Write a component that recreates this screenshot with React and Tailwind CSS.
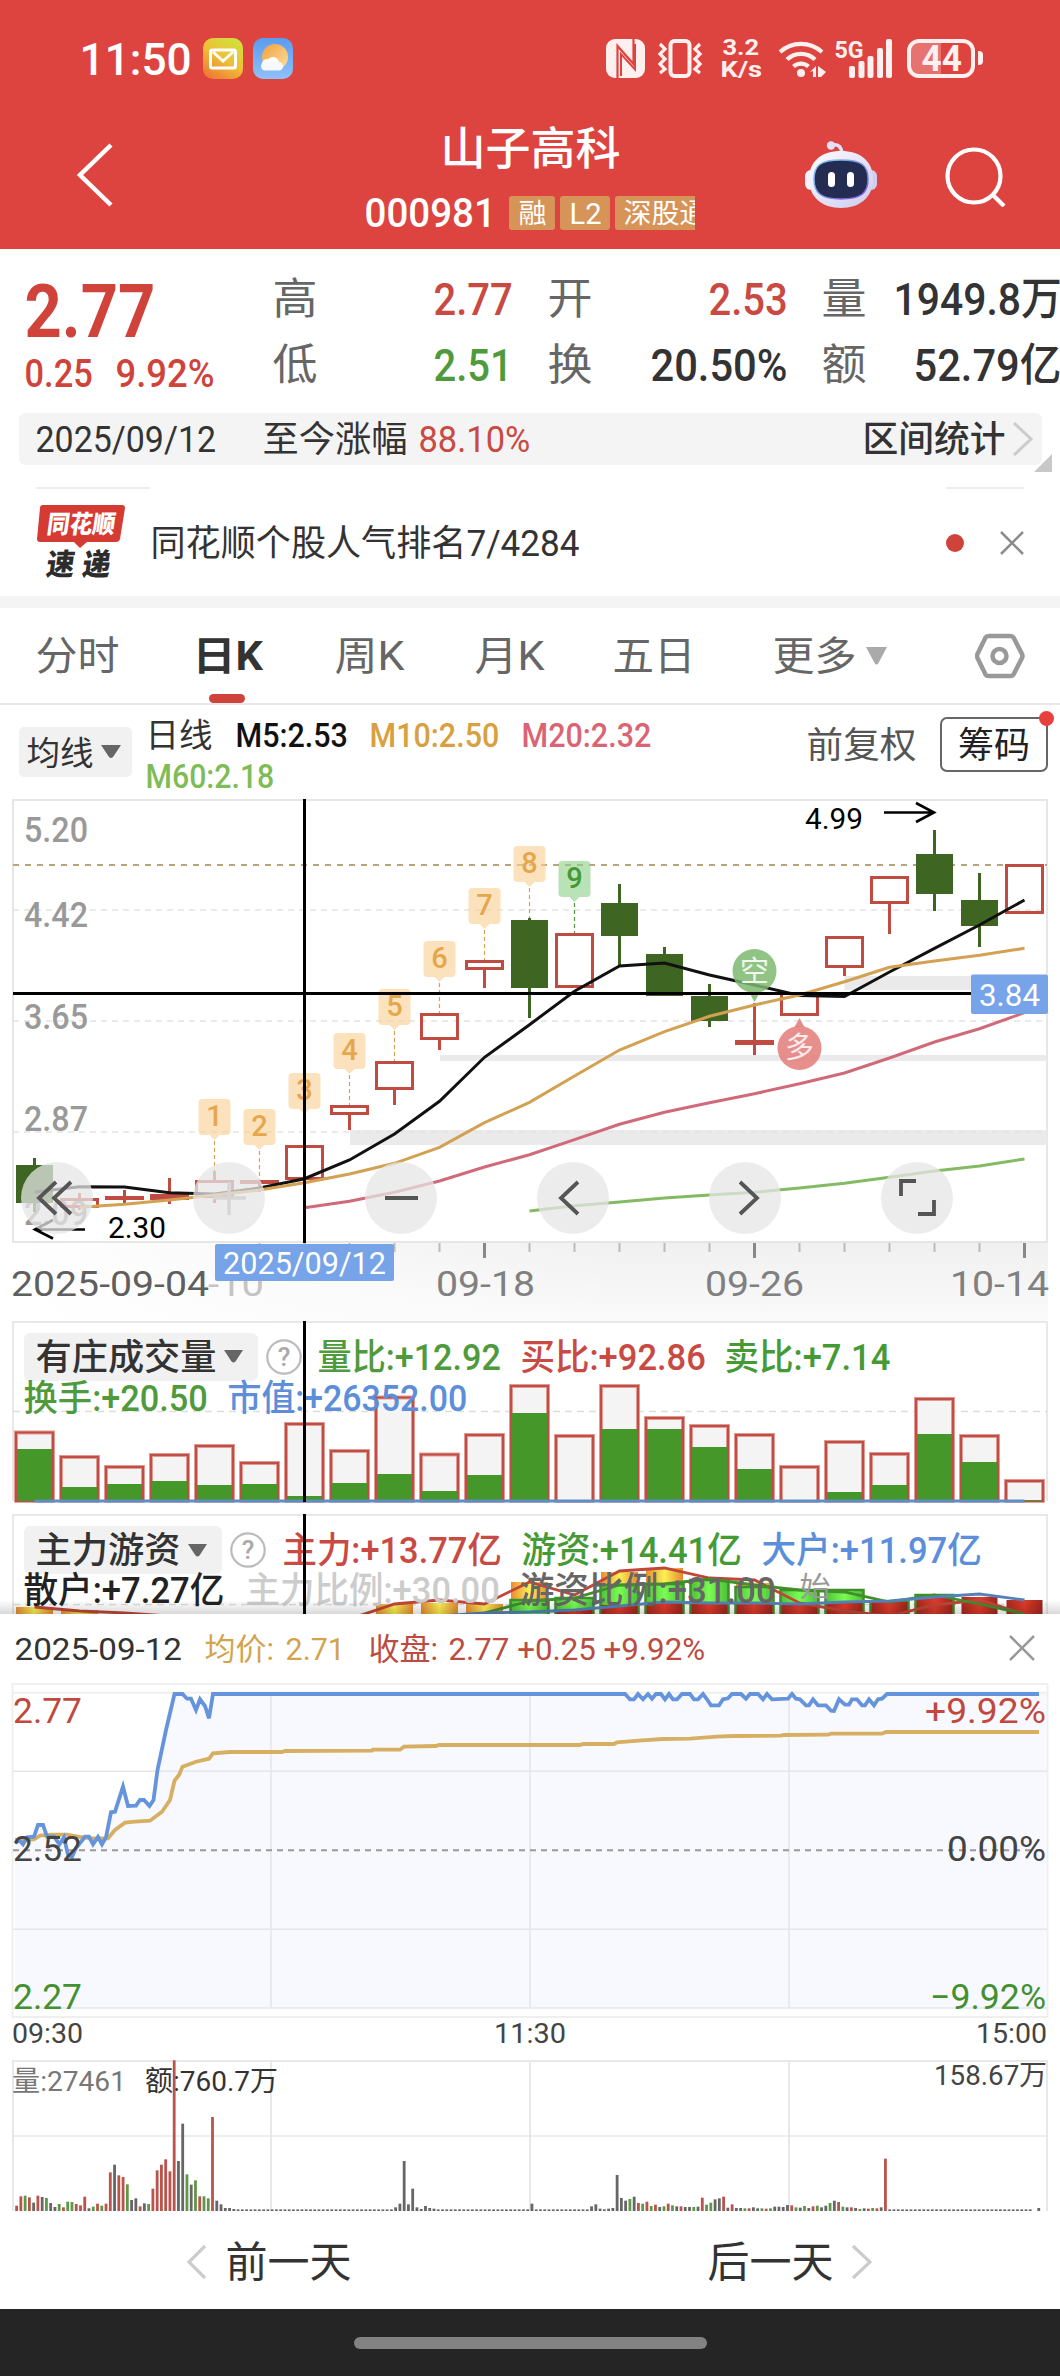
import { useLayoutEffect, useRef, useState } from 'react';
import { clsx } from 'clsx';

/**
 * Text squeezed or stretched horizontally to a fixed width.
 * The glyphs' side bearings may stick out by a pixel on each side.
 * @param {{ w: number, className?: string, children: any }} props
 * @returns {JSX.Element}
 */
function Fit({ w, className, children }) {
  const ref = useRef(null);
  const [scale, setScale] = useState(1);

  useLayoutEffect(() => {
    setScale((w + 3) / ref.current.offsetWidth);
  }, [w, children]);

  return (
    <span className={clsx('block shrink-0 leading-none', className)} style={{ width: w }}>
      <span
        ref={ref}
        className="inline-block origin-left whitespace-pre align-top"
        style={{ transform: `translate(-1.5px, 1px) scaleX(${scale})` }}
      >
        {children}
      </span>
    </span>
  );
}

/** Text inside a chart. */
function Label({ x, y, w, size = 35, fill = '#999', weight = 400, children }) {
  return (
    <text
      x={x}
      y={y}
      textLength={w}
      lengthAdjust="spacingAndGlyphs"
      fontSize={size}
      fontWeight={weight}
      fill={fill}
    >
      {children}
    </text>
  );
}

function StatusBar() {
  return (
    <div className="flex h-[116px] items-center pl-[81px] text-white">
      <Fit w={109} className="text-[45px] font-medium">11:50</Fit>
      <svg className="ml-[13px]" width="40" height="41" viewBox="0 0 40 41">
        <defs>
          <linearGradient id="mail" x1="0.8" y1="0" x2="0.2" y2="1">
            <stop offset="0" stopColor="#cfe23c" />
            <stop offset="0.5" stopColor="#efbf35" />
            <stop offset="1" stopColor="#ee7836" />
          </linearGradient>
        </defs>
        <rect width="40" height="41" rx="10" fill="url(#mail)" />
        <rect x="7.500" y="12" width="25" height="18" rx="2" fill="none" stroke="#fff" strokeWidth="3" />
        <path d="M10 14l10 9 10-9" fill="none" stroke="#fff" strokeWidth="3" />
      </svg>
      <svg className="ml-[10px]" width="40" height="41" viewBox="0 0 40 41">
        <defs>
          <linearGradient id="sky" x1="0" y1="0" x2="0" y2="1">
            <stop offset="0" stopColor="#5a9cf0" />
            <stop offset="1" stopColor="#8fc1f8" />
          </linearGradient>
          <linearGradient id="sun" x1="0" y1="0" x2="1" y2="1">
            <stop offset="0" stopColor="#f3a03c" />
            <stop offset="1" stopColor="#fbe0a0" />
          </linearGradient>
        </defs>
        <rect width="40" height="41" rx="10" fill="url(#sky)" />
        <circle cx="22" cy="19" r="13" fill="url(#sun)" />
        <circle cx="14" cy="26" r="5" fill="#fff" />
        <circle cx="20" cy="25" r="6" fill="#fff" />
        <rect x="8" y="24" width="22" height="8.500" rx="4.200" fill="#f6f8fc" />
      </svg>

      <svg className="ml-[313px]" width="39" height="39" viewBox="0 0 39 39">
        <rect width="39" height="39" rx="9" fill="#fff0f0" />
        <path d="M11.500 39V7l16 18V0" fill="none" stroke="#DE443F" strokeWidth="2.200" />
        <path d="M15 37V15l14 15.500V5" fill="none" stroke="#DE443F" strokeWidth="2" />
      </svg>
      <svg className="ml-[12px]" width="46" height="39" viewBox="0 0 46 39" fill="none" stroke="#fff0f0">
        <rect x="13.500" y="2" width="19" height="35" rx="4" strokeWidth="4" />
        <path d="M3 5l5 5-5 5 5 5-5 5 5 5-5 4M43 5l-5 5 5 5-5 5 5 5-5 5 5 4" strokeWidth="3.200" />
      </svg>
      <div className="ml-[18px] flex w-[39px] flex-col items-center text-[22px] font-bold text-[#fff0f0]">
        <Fit w={34}>3.2</Fit>
        <Fit w={38}>K/s</Fit>
      </div>
      <svg className="ml-[18px]" width="48" height="39" viewBox="0 0 48 39" fill="none" stroke="#fff0f0" strokeWidth="4.200">
        <path d="M2 13a31 31 0 0 1 42 0" />
        <path d="M9 20.500a20 20 0 0 1 28 0" />
        <path d="M15.500 27.500a11 11 0 0 1 15 0" />
        <circle cx="23" cy="34" r="4" fill="#fff0f0" stroke="none" />
        <path d="M32 33l6-6v11h-3v-6zM40 27l8 6-5 5h-3z" fill="#fff0f0" stroke="none" />
      </svg>
      <div className="relative ml-[10px] h-[39px] w-[57px]">
        <Fit w={26} className="absolute top-[-2px] left-0 text-[24px] font-bold text-[#fff0f0]">5G</Fit>
        <svg width="57" height="39" viewBox="0 0 57 39" fill="#fff0f0">
          <rect x="13" y="27" width="6" height="12" rx="2" />
          <rect x="22.500" y="22" width="6" height="17" rx="2" />
          <rect x="31.500" y="17" width="6" height="22" rx="2" />
          <rect x="41" y="9" width="6" height="30" rx="2" />
          <rect x="50" y="0" width="6" height="39" rx="2" />
        </svg>
      </div>
      <div className="ml-[14px] flex items-center">
        <div className="flex h-[39px] w-[68px] items-center justify-center rounded-[12px] border-[4px] border-[#fff0f0] bg-linear-to-r from-[#e77370] from-50% to-[#DE443F] to-50%">
          <Fit w={37} className="text-[36px] font-bold text-[#fff0f0]">44</Fit>
        </div>
        <div className="ml-[3px] h-[14px] w-[5px] rounded-r-[4px] bg-[#fff0f0]" />
      </div>
    </div>
  );
}

function Robot() {
  return (
    <svg className="mt-[25px] shrink-0" width="72" height="67" viewBox="0 0 72 67">
      <defs>
        <linearGradient id="shell" x1="0" y1="0" x2="1" y2="1">
          <stop offset="0" stopColor="#fff" />
          <stop offset="1" stopColor="#cdc9ee" />
        </linearGradient>
        <linearGradient id="rim" x1="0" y1="0" x2="1" y2="1">
          <stop offset="0" stopColor="#7fd0f0" />
          <stop offset="1" stopColor="#7a4fe0" />
        </linearGradient>
      </defs>
      <path d="M27 4c7-1 9 2 10 8" fill="none" stroke="#e6e0f4" strokeWidth="3.500" />
      <circle cx="26" cy="4.500" r="4.200" fill="#e6e0f4" />
      <rect x="0" y="29" width="12" height="20" rx="6" fill="#f3f1fb" />
      <rect x="60" y="29" width="12" height="20" rx="6" fill="#d2cdf0" />
      <path d="M36 10c19 0 32 10 32 28S55 67 36 67 4 56 4 38s13-28 32-28z" fill="url(#shell)" />
      <path d="M36 19c20 0 27 5 27 19s-7 20-27 20S9 52 9 38s7-19 27-19z" fill="#242c52" stroke="url(#rim)" strokeWidth="1.500" />
      <rect x="23" y="31" width="7" height="15" rx="3.500" fill="#fff" />
      <rect x="42" y="31" width="7" height="15" rx="3.500" fill="#fff" />
    </svg>
  );
}

function TitleBar() {
  return (
    <div className="flex h-[133px] items-start pl-[76px] text-white">
      <svg className="mt-[27px]" width="38" height="64" viewBox="0 0 38 64">
        <path d="M35 2L4 32l31 30" fill="none" stroke="#fff" strokeWidth="4.500" />
      </svg>
      <div className="ml-[252px] w-[329px] overflow-hidden">
        <div className="mt-[8px] flex h-[48px] items-center justify-center">
          <Fit w={177} className="text-[45px] font-medium">山子高科</Fit>
        </div>
        <div className="mt-[24px] flex h-[34px] items-center">
          <Fit w={128} className="text-[40px] font-medium">000981</Fit>
          <div className="ml-[15px] flex shrink-0 gap-[5px] text-[27px]">
            <div className="flex h-[34px] w-[46px] items-center justify-center rounded-[3px] bg-[#D69458]"><Fit w={25}>融</Fit></div>
            <div className="flex h-[34px] w-[50px] items-center justify-center rounded-[3px] bg-[#D69458]"><Fit w={29} className="text-[30px]">L2</Fit></div>
            <div className="flex h-[34px] w-[98px] items-center rounded-[3px] bg-[#D69458] pl-[10px]"><Fit w={81}>深股通</Fit></div>
          </div>
        </div>
      </div>
      <div className="ml-[110px]"><Robot /></div>
      <svg className="mt-[31px] ml-[68px]" width="62" height="60" viewBox="0 0 62 60" fill="none" stroke="#fff" strokeWidth="4.200">
        <circle cx="29" cy="29" r="26.500" />
        <path d="M47 47l12 12" />
      </svg>
    </div>
  );
}

function Stat({ name, value, w, tone }) {
  return (
    <div className="flex h-[66px] items-center justify-between">
      <Fit w={42} className="text-[43px] text-[#666]">{name}</Fit>
      <Fit w={w} className={clsx('text-[45px] font-medium', tone)}>{value}</Fit>
    </div>
  );
}

function Quote() {
  return (
    <div className="flex h-[164px] pt-[16px]">
      <div className="w-[274px] pl-[26px] text-[#D0433B]">
        <Fit w={128} className="mt-[8px] text-[75px] font-bold">2.77</Fit>
        <div className="mt-[6px] flex gap-[26px] text-[39px] font-medium">
          <Fit w={65}>0.25</Fit>
          <Fit w={96}>9.92%</Fit>
        </div>
      </div>
      <div className="w-[237px]">
        <Stat name="高" value="2.77" w={76} tone="text-[#C94A42]" />
        <Stat name="低" value="2.51" w={76} tone="text-[#4F9A3C]" />
      </div>
      <div className="w-[275px] pl-[38px]">
        <Stat name="开" value="2.53" w={76} tone="text-[#C94A42]" />
        <Stat name="换" value="20.50%" w={134} tone="text-[#333]" />
      </div>
      <div className="w-[274px] pl-[37px]">
        <Stat name="量" value="1949.8万" w={165} tone="text-[#333]" />
        <Stat name="额" value="52.79亿" w={145} tone="text-[#333]" />
      </div>
    </div>
  );
}

function IntervalBar() {
  return (
    <div className="relative mr-[18px] ml-[19px] flex h-[52px] items-center rounded-[6px] bg-[#f4f4f4] pl-[18px] text-[36px] text-[#333]">
      <Fit w={178}>2025/09/12</Fit>
      <Fit w={142} className="ml-[49px]">至今涨幅</Fit>
      <Fit w={109} className="ml-[14px] text-[#C94A42]">88.10%</Fit>
      <Fit w={140} className="ml-[335px] font-medium">区间统计</Fit>
      <svg className="ml-[8px]" width="22" height="36" viewBox="0 0 22 36">
        <path d="M2 2l17 16L2 34" fill="none" stroke="#ccc" strokeWidth="3" />
      </svg>
      <svg className="absolute -right-[10px] -bottom-[7px]" width="18" height="18" viewBox="0 0 18 18">
        <path d="M18 0v18H0z" fill="#c8c8c8" />
      </svg>
    </div>
  );
}

function Notice() {
  return (
    <div className="h-[131px] pt-[22px]">
      <div className="flex justify-between pr-[36px] pl-[36px]">
        <div className="h-[2px] w-[114px] bg-[#eee]" />
        <div className="h-[2px] w-[78px] bg-[#eee]" />
      </div>
      <div className="flex h-[107px] items-center pl-[36px]">
        <svg width="90" height="80" viewBox="0 -2 90 80" fontWeight="900" className="font-['Noto_Sans_CJK_SC',sans-serif]">
          <path d="M7 0h79q3 0 3 3l-5 31q-1 3-4 3H51l-7 6-6-6H4q-3 0-3-3L4 3q0-3 3-3z" fill="#D53A33" />
          <text transform="skewX(-8)" x="14" y="28" textLength="68" lengthAdjust="spacingAndGlyphs" fontSize="25" fill="#fff">同花顺</text>
          <text transform="skewX(-8)" x="19" y="70" textLength="28" lengthAdjust="spacingAndGlyphs" fontSize="30" fill="#2c2c2c">速</text>
          <text transform="skewX(-8)" x="55" y="70" textLength="28" lengthAdjust="spacingAndGlyphs" fontSize="30" fill="#2c2c2c">递</text>
        </svg>
        <Fit w={426} className="ml-[26px] text-[36px] text-[#333]">同花顺个股人气排名7/4284</Fit>
        <div className="ml-[368px] size-[18px] rounded-full bg-[#D0433B]" />
        <svg className="ml-[36px]" width="24" height="24" viewBox="0 0 24 24">
          <path d="M1 1l22 22M23 1L1 23" stroke="#8c8c8c" strokeWidth="2.500" />
        </svg>
      </div>
    </div>
  );
}

function Tabs() {
  return (
    <div className="flex h-[97px] items-center border-b-2 border-[#e8e8e8] pl-[37px] text-[40px] text-[#666]">
      <Fit w={81}>分时</Fit>
      <div className="relative ml-[76px] text-[#333]">
        <Fit w={67} className="font-bold">日K</Fit>
        <div className="absolute top-[58px] left-[15px] h-[9px] w-[36px] rounded-[5px] bg-[#D0433B]" />
      </div>
      <Fit w={67} className="ml-[75px]">周K</Fit>
      <Fit w={67} className="ml-[73px]">月K</Fit>
      <Fit w={80} className="ml-[71px]">五日</Fit>
      <Fit w={81} className="ml-[80px]">更多</Fit>
      <svg className="ml-[10px]" width="23" height="19" viewBox="0 0 23 19">
        <path d="M1 1h21L13.500 17q-2 3-4 0z" fill="#aaa" />
      </svg>
      <svg className="ml-[87px]" width="50" height="46" viewBox="0 0 50 46" fill="none" stroke="#999" strokeWidth="4.500">
        <path d="M13.500 3h22q2 0 3 1.500L47 21q1 2 0 4l-8.500 16.500q-1 1.500-3 1.500h-22q-2 0-3-1.500L2.500 25q-1-2 0-4L10.500 4.500q1-1.500 3-1.500z" />
        <circle cx="24.500" cy="23" r="7" />
      </svg>
    </div>
  );
}

function AverageRow() {
  return (
    <div className="flex h-[94px] text-[34px]">
      <div className="mt-[22px] ml-[19px] flex h-[50px] w-[113px] items-center rounded-[5px] bg-[#f1f1f1] pl-[9px] text-[33px] text-[#333]">
        <Fit w={64}>均线</Fit>
        <svg className="ml-[9px]" width="20" height="14" viewBox="0 0 20 14">
          <path d="M0 0h20l-8 12q-2 2-4 0z" fill="#666" />
        </svg>
      </div>
      <div className="ml-[15px] w-[503px] pt-[12px]">
        <div className="flex h-[34px] items-center font-medium">
          <Fit w={64} className="text-[33px] font-normal text-[#333]">日线</Fit>
          <Fit w={109} className="ml-[26px] text-[#111]">M5:2.53</Fit>
          <Fit w={127} className="ml-[25px] text-[#D8A03E]">M10:2.50</Fit>
          <Fit w={127} className="ml-[25px] text-[#DB6474]">M20:2.32</Fit>
        </div>
        <Fit w={126} className="mt-[7px] font-medium text-[#7FBC58]">M60:2.18</Fit>
      </div>
      <Fit w={107} className="mt-[22px] ml-[158px] text-[36px] text-[#555]">前复权</Fit>
      <div className="relative mt-[12px] ml-[25px] flex h-[55px] w-[108px] items-center justify-center rounded-[7px] border-2 border-[#666] text-[#222]">
        <Fit w={69} className="text-[36px]">筹码</Fit>
        <div className="absolute -top-[8px] -right-[8px] size-[15px] rounded-full bg-[#E8403C]" />
      </div>
    </div>
  );
}

const cx = (i) => 34.5 + i * 45;
const line = (start, ys) => ys.map((y, k) => `${cx(start + k)},${y}`).join(' ');

// [up, bodyTop, bodyBottom, wickTop, wickBottom]
const CANDLES = [
  [0, 1165, 1203, 1158, 1212],
  [1, 1198, 1208, 1193, 1210],
  [1, 1196, 1200, 1190, 1203],
  [1, 1194, 1200, 1178, 1204],
  [1, 1180, 1198, 1171, 1203],
  [1, 1180, 1184, 1180, 1192],
  [1, 1145, 1180, 1145, 1180],
  [1, 1105, 1115, 1105, 1130],
  [1, 1061, 1090, 1061, 1105],
  [1, 1013, 1040, 1013, 1050],
  [1, 960, 970, 960, 988],
  [0, 920, 988, 918, 1018],
  [1, 933, 988, 933, 988],
  [0, 903, 936, 884, 965],
  [0, 954, 996, 947, 996],
  [0, 996, 1021, 984, 1027],
  [1, 1040, 1045, 1003, 1055],
  [1, 992, 1016, 992, 1016],
  [1, 936, 968, 936, 976],
  [1, 876, 904, 876, 934],
  [0, 854, 894, 830, 911],
  [0, 900, 926, 873, 947],
  [1, 864, 914, 864, 914],
];

const FLAGS = [1099, 1109, 1073, 1033, 989, 941, 888, 846, 861];

const MA5 = line(0, [1192, 1186.7, 1187, 1192.7, 1194, 1188, 1178.7, 1160, 1134, 1101.3, 1057.3, 1024.7, 991.3, 966, 963, 975, 985, 995.5, 996.5, 972, 948.3, 925, 900]);
const MA10 = line(1, [1207.3, 1204.3, 1200, 1195, 1190, 1182.7, 1174, 1163.3, 1147.3, 1122.7, 1102.3, 1076, 1050, 1031.7, 1016.3, 1005, 995, 981.7, 967.3, 961, 955.3, 948.3]);
const MA20 = line(6, [1207.7, 1201.3, 1192.3, 1181, 1167, 1154.7, 1139.7, 1124.3, 1112.3, 1102.7, 1093.7, 1083.7, 1073, 1058, 1042, 1028.7, 1012.7]);
const MA60 = line(11, [1211, 1205.7, 1202, 1198, 1195, 1192.3, 1188, 1183.3, 1177.3, 1171, 1166, 1159]);

const CONTROLS = [
  'M-1-16l-17 16 17 16M14-16l-17 16 17 16',
  '',
  'M-16 0h33',
  'M5-16l-17 16 17 16',
  'M-5-16l17 16-17 16',
  'M-16-2v-15h15M17 2v14H1',
];

function KLine() {
  return (
    <svg width="1060" height="522" viewBox="0 799 1060 522" className="block">
      <defs>
        <linearGradient id="axis" x1="0" y1="0" x2="0" y2="1">
          <stop offset="0" stopColor="#f0f0f0" />
          <stop offset="1" stopColor="#fafafa" />
        </linearGradient>
        <linearGradient id="axisFade" x1="0" y1="0" x2="1" y2="0">
          <stop offset="0" stopColor="#fff" />
          <stop offset="0.600" stopColor="#fff" stopOpacity="0" />
        </linearGradient>
      </defs>
      <rect x="13" y="1243" width="1035" height="78" fill="url(#axis)" />
      <rect x="13" y="1243" width="1035" height="78" fill="url(#axisFade)" />
      <rect x="13" y="800" width="1034" height="442" fill="#fff" stroke="#e6e6e6" strokeWidth="2" />

      <path d="M350 1130h697v15H350zM440 1055h607v6H440zM844.500 976h202v14h-202z" fill="#eaeaea" />
      <path d="M13 910h1034M13 1021h1034M13 1132h1034" stroke="#e4e4e4" strokeWidth="1.500" strokeDasharray="6 5" />
      <path d="M13 865h1034" stroke="#B9A27C" strokeWidth="1.800" strokeDasharray="6 6" />

      <Label x={24} y={841.5} w={64} weight={500}>5.20</Label>
      <Label x={24} y={926.5} w={64} weight={500}>4.42</Label>
      <Label x={24} y={1028.5} w={64} weight={500}>3.65</Label>
      <Label x={24} y={1130.500} w={64} weight={500}>2.87</Label>
      <Label x={24} y={1224.500} w={64} weight={500}>2.09</Label>

      {CANDLES.map(([up, top, bottom, high, low], i) => {
        const x = cx(i);
        if (!up) {
          return (
            <g key={i} fill="#3E6622">
              <rect x={x - 1.5} y={high} width="3" height={low - high} />
              <rect x={x - 18.5} y={top} width="37" height={bottom - top} />
            </g>
          );
        }
        return (
          <g key={i} stroke="#C04B43" strokeWidth="3" fill="none">
            <path d={`M${x} ${high}V${top}M${x} ${bottom}V${low}`} />
            <rect x={x - 18} y={top + 1.5} width="36" height={Math.max(bottom - top - 3, 1)} />
          </g>
        );
      })}

      <g fill="none" strokeWidth="3">
        <polyline points={MA5} stroke="#111" />
        <polyline points={MA60} stroke="#85BA64" />
        <polyline points={MA20} stroke="#D06A79" />
        <polyline points={MA10} stroke="#D3A152" />
      </g>

      {FLAGS.map((y, k) => {
        const x = cx(k + 4);
        const last = k === 8;
        const end = [1171, 1180, 1120, 1105, 1061, 1013, 960, 918, 933][k];
        return (
          <g key={k}>
            <path d={`M${x} ${y + 42}V${end}`} stroke={last ? '#4F9A3C' : '#D3A152'} strokeWidth="1.200" strokeDasharray="4 3" />
            <path
              d={`M${x - 12} ${y}h24q4 0 4 4v28q0 4-4 4h-7l-5 5-5-5h-7q-4 0-4-4v-28q0-4 4-4z`}
              fill={last ? '#8fd08b' : '#F8D194'}
              fillOpacity="0.620"
            />
            <text x={x} y={y + 26.5} textAnchor="middle" fontSize="29" fontWeight="500" fill={last ? '#459A35' : '#E5A74B'}>
              {k + 1}
            </text>
          </g>
        );
      })}

      <path d="M754.500 1002l-5-9h10z" fill="#8FC283" />
      <circle cx="754.500" cy="971" r="22" fill="#7DB96F" fillOpacity="0.850" />
      <text x="754.500" y="982" textAnchor="middle" fontSize="29" fill="#eef8ec">空</text>
      <path d="M799.500 1018l-5 9h10z" fill="#E58E8B" />
      <circle cx="799.500" cy="1048" r="22" fill="#E27F7C" fillOpacity="0.880" />
      <text x="799.500" y="1058" textAnchor="middle" fontSize="29" fill="#fdecec">多</text>

      <Label x={805} y={829} w={58} size={30} fill="#000">4.99</Label>
      <path d="M884 812.500h49M916 803l18 9.500-18 9.500" fill="none" stroke="#000" strokeWidth="2.600" />
      <Label x={108} y={1238} w={58} size={30} fill="#000">2.30</Label>
      <path d="M85 1229.500H36M53 1220l-18 9.500 18 9" fill="none" stroke="#000" strokeWidth="2.600" />

      {CONTROLS.map((d, i) => (
        <g key={i} transform={`translate(${57 + i * 172} 1198)`}>
          <circle r="36" fill="#e6e6e6" fillOpacity="0.750" />
          {i === 1 && <path d="M-16 0h33M0-16v33" stroke="#d6d6d6" strokeWidth="3.500" />}
          <path d={d} fill="none" stroke="#555" strokeWidth="3.800" />
        </g>
      ))}

      {Array.from({ length: 18 }, (_, k) => k + 5).map((i) => {
        const major = i % 6 === 4;
        return <path key={i} d={`M${cx(i)} 1243v${major ? 15 : 9}`} stroke={major ? '#888' : '#bbb'} strokeWidth={major ? 3 : 2} />;
      })}
      <Label x={208} y={1295.5} w={56} fill="#c4c4c4">-10</Label>
      <Label x={11} y={1295.5} w={198} fill="#5f5f5f">2025-09-04</Label>
      <Label x={436} y={1295.5} w={99} fill="#808080">09-18</Label>
      <Label x={705} y={1295.5} w={99} fill="#808080">09-26</Label>
      <Label x={950} y={1295.5} w={99} fill="#808080">10-14</Label>

      <path d="M13 993.500h1035" stroke="#000" strokeWidth="3" />
      <rect x="971" y="974.500" width="77" height="39.500" rx="2" fill="#77A3E8" />
      <Label x={979} y={1006} w={61} size={32} fill="#fff">3.84</Label>
      <rect x="215" y="1244" width="179" height="37" rx="2" fill="#77A3E8" />
      <Label x={223} y={1274} w={163} size={32} fill="#fff">2025/09/12</Label>
      <path d="M304.500 799v444" stroke="#000" strokeWidth="3" />
    </svg>
  );
}

function Help({ className }) {
  return (
    <svg className={className} width="36" height="36" viewBox="0 0 36 36">
      <circle cx="18" cy="18" r="16.700" fill="none" stroke="#bbb" strokeWidth="2.200" />
      <text x="18" y="27" textAnchor="middle" fontSize="26" fill="#aaa">?</text>
    </svg>
  );
}

function PaneName({ w, box, children }) {
  return (
    <div className={clsx('flex h-[48px] items-center rounded-[6px] bg-[#f1f1f1] pl-[13px] text-[#333]', box)}>
      <Fit w={w}>{children}</Fit>
      <svg className="ml-[9px]" width="19" height="13" viewBox="0 0 19 13">
        <path d="M0 0h19l-7.500 11.500q-2 2-4 0z" fill="#666" />
      </svg>
    </div>
  );
}

// Bar top and top of the filled part, per day
const TURNOVER = [
  [1431.5, 1449], [1456, 1487], [1466, 1484], [1454, 1481], [1445, 1485], [1462, 1484],
  [1423, 1496], [1450, 1483], [1396.5, 1474], [1453.5, 1491], [1434, 1475], [1385, 1413],
  [1435, 1502], [1385, 1429], [1417, 1429], [1425, 1447], [1434, 1469], [1466, 1502],
  [1441, 1492], [1453, 1485], [1398, 1434], [1435, 1462], [1480, 1500],
];

function VolumePane() {
  return (
    <div className="relative h-[193px] text-[36px] font-medium">
      <svg className="absolute inset-0" width="1060" height="193" viewBox="0 1321 1060 193">
        <path d="M13 1501V1322h1034v179" fill="#fff" stroke="#e8e8e8" strokeWidth="2" />
        <path d="M13 1411.500h1034" stroke="#ddd" strokeWidth="1.500" strokeDasharray="7 5" />
        {TURNOVER.map(([top, fill], i) => (
          <g key={i}>
            <rect x={cx(i) - 18.5} y={top + 1} width="37" height={1501 - top} fill="#f4f4f4" stroke="#E39A93" strokeWidth="4" />
            <rect x={cx(i) - 18.5} y={fill} width="37" height={1502 - fill} fill="#459729" />
            <rect x={cx(i) - 18.5} y={top + 1} width="37" height={1501 - top} fill="none" stroke="#BE4E46" strokeWidth="2" />
          </g>
        ))}
        <rect x="0" y="1502.500" width="1060" height="11" fill="#fff" />
        <path d="M34.500 1501h990" stroke="#5F8EC4" strokeWidth="3" />
      </svg>
      <div className="relative flex h-[71px] items-center pl-[24px]">
        <PaneName w={178} box="w-[234px]">有庄成交量</PaneName>
        <Help className="ml-[8px]" />
        <Fit w={180} className="ml-[17px] text-[#4F9A3C]">量比:+12.92</Fit>
        <Fit w={182} className="ml-[23px] text-[#C94A42]">买比:+92.86</Fit>
        <Fit w={163} className="ml-[22px] text-[#459A35]">卖比:+7.14</Fit>
      </div>
      <div className="relative -mt-[14px] flex h-[40px] items-center pl-[25px]">
        <Fit w={181} className="text-[#4F9A3C]">换手:+20.50</Fit>
        <Fit w={237} className="ml-[23px] text-[#5C8ED9]">市值:+26352.00</Fit>
      </div>
      <div className="absolute top-0 left-[303px] h-[181px] w-[3px] bg-black" />
    </div>
  );
}

const ORANGE = [[0, 1607], [1, 1610], [8, 1604], [9, 1603], [10, 1604], [11, 1582], [12, 1597], [13, 1572], [14, 1568], [16, 1583]];
const GREEN = [[11, 1600], [12, 1598], [13, 1585], [14, 1584], [15, 1580], [16, 1587], [17, 1590], [18, 1590], [19, 1602], [20, 1595]];
const RED = [[12, 1610], [13, 1605], [14, 1603], [15, 1603], [16, 1604], [17, 1604], [18, 1602], [19, 1602], [20, 1598], [21, 1597], [22, 1600]];

function CapitalPane() {
  return (
    <div className="relative h-[100px] overflow-hidden text-[36px] font-medium">
      <svg className="absolute inset-0" width="1060" height="100" viewBox="0 1514 1060 100">
        <defs>
          <linearGradient id="orange">
            <stop offset="0" stopColor="#E88C33" />
            <stop offset="0.500" stopColor="#FCF153" />
            <stop offset="1" stopColor="#E58A30" />
          </linearGradient>
          <linearGradient id="green">
            <stop offset="0" stopColor="#4CC23A" />
            <stop offset="0.500" stopColor="#7BFB52" />
            <stop offset="1" stopColor="#49BE38" />
          </linearGradient>
          <linearGradient id="red">
            <stop offset="0" stopColor="#A52A20" />
            <stop offset="0.500" stopColor="#E03B2A" />
            <stop offset="1" stopColor="#9E271E" />
          </linearGradient>
        </defs>
        <path d="M13 1620V1515h1034v105" fill="#fff" stroke="#e8e8e8" strokeWidth="2" />
        <path d="M13 1604.500h1034" stroke="#ddd" strokeWidth="1.500" strokeDasharray="7 5" />
        {ORANGE.map(([i, y]) => <rect key={i} x={cx(i) - 18.5} y={y} width="37" height="50" fill="url(#orange)" />)}
        {GREEN.map(([i, y]) => <rect key={i} x={cx(i) - 19} y={y} width="38" height="50" fill="url(#green)" stroke="#3F8F2A" strokeWidth="2.500" />)}
        {RED.map(([i, y]) => <rect key={i} x={cx(i) - 18} y={y} width="36" height="50" fill="url(#red)" />)}
        <g fill="none" strokeWidth="2.800">
          <polyline points={line(0, [1607, 1611, 1613, 1616, 1619, 1620, 1620, 1619, 1604, 1600, 1604, 1582, 1595, 1571, 1568, 1578, 1580, 1603, 1611, 1616, 1605, 1600, 1614])} stroke="#BF4638" />
          <polyline points={line(10, [1613, 1601, 1598, 1585, 1584, 1579, 1585, 1590, 1592, 1602, 1595, 1604, 1614])} stroke="#3F8F2A" />
          <polyline points={line(9, [1616, 1613, 1612, 1610, 1606, 1602, 1603, 1603, 1604, 1602, 1601, 1597, 1594, 1600])} stroke="#5482B8" />
        </g>
      </svg>
      <div className="relative flex h-[72px] items-center pl-[24px]">
        <PaneName w={142} box="w-[198px]">主力游资</PaneName>
        <Help className="ml-[8px]" />
        <Fit w={216} className="ml-[18px] text-[#C94A42]">主力:+13.77亿</Fit>
        <Fit w={217} className="ml-[23px] text-[#459A35]">游资:+14.41亿</Fit>
        <Fit w={217} className="ml-[23px] text-[#5C8ED9]">大户:+11.97亿</Fit>
      </div>
      <div className="relative -mt-[16px] flex h-[40px] items-center pl-[25px]">
        <Fit w={198} className="text-[#222]">散户:+7.27亿</Fit>
        <Fit w={251} className="ml-[24px] text-[#ccc]">主力比例:+30.00</Fit>
        <Fit w={253} className="ml-[23px] text-[#666]">游资比例:+31.00</Fit>
        <Fit w={28} className="-mt-[6px] ml-[27px] text-[28px] font-normal text-[#999]">始</Fit>
      </div>
      <div className="absolute top-0 left-[303px] h-[100px] w-[3px] bg-black" />
      <div className="absolute bottom-0 h-[14px] w-full bg-linear-to-b from-transparent to-black/15" />
    </div>
  );
}

const PRICE = '15,1843 19,1840 23,1844.300 27,1837.300 34,1836.700 38,1825 43,1825 47,1836.700 54,1836.700 59.500,1844.300 64,1837.300 68,1855 72,1856.700 76,1848 85,1836.700 89,1836.700 93,1844.300 98,1837 102,1844.300 106,1837.300 111,1812.300 115,1811.700 123,1786.700 128,1806 136,1805.700 140,1800 144,1800 149.500,1806 153.500,1800 157.500,1770 166,1730 174.500,1694 182.500,1694 187,1698.700 191,1698.700 196,1710 200,1699.300 205,1706 209,1718.300 213,1694 625,1694 630,1699.300 634,1699.300 638,1694 643,1699.300 648,1694 652,1698.700 656,1694 661,1694 665,1699.300 669,1694 673,1699.300 677,1699.300 682,1694 690,1694 694,1699.300 698,1699.300 703,1694 707,1699.300 711,1705.300 719,1705.300 723,1699.300 728,1698.300 732,1694 741,1694 746,1698.700 750,1694 758,1694 763,1699.300 767,1694 772,1699.300 788,1698.700 792,1694 796,1698.700 800,1699.300 806,1705.300 809,1705.300 813,1699.300 818,1705.300 826,1705.300 831,1710.700 834,1711 839,1699.300 845,1704.700 849,1704.700 852,1699.300 857,1699.300 862,1705.300 865,1705.300 869,1699.300 874,1705.300 878,1699.300 882,1698.700 887,1694 1039,1694';
const AVERAGE = '15,1840 34,1839.300 40,1835.700 51,1834.700 67,1834.700 78,1836.700 91,1838.300 108,1838.300 115,1830 125,1822.700 135,1821.700 150,1820.700 162,1811.700 170,1800 174.500,1780.700 179,1775 182.500,1766.700 196,1761.700 209,1758.700 213,1753.300 230,1752 282,1752 285,1751 372,1750.700 373,1749.700 400,1749.700 404,1746.700 436,1746 439,1745 580,1745 583,1744 614,1744 617,1742.300 642,1740.300 663,1739 690,1738.700 717,1736.700 733,1736 781,1735.700 784,1735 828,1734.700 831,1733.700 882,1733.700 886,1732 1039,1732';

function IntradayChart() {
  return (
    <svg width="1060" height="372" viewBox="0 1682 1060 372" className="block">
      <path d="M12.500 1684h1035v333H12.500zM13 1692.700h1034" fill="none" stroke="#efefef" strokeWidth="2" />
      <polygon points={`15,2008 ${PRICE} 1046,1694 1046,2008`} fill="#F8F9FE" />
      <path d="M13 1771.300h1034M13 1929.300h1034M13 2008h1034M271 1693v315M530 1693v315M789 1693v315" stroke="#e4e6ea" strokeWidth="1.600" />
      <path d="M13 1850.300h1034" stroke="#999" strokeWidth="2" strokeDasharray="6 5" />
      <polyline points={AVERAGE} fill="none" stroke="#D7AF62" strokeWidth="3.800" />
      <polyline points={PRICE} fill="none" stroke="#6594DC" strokeWidth="3.800" />
      <Label x={13} y={1723} w={69} fill="#C0483F">2.77</Label>
      <Label x={13} y={1861} w={69} fill="#444">2.52</Label>
      <Label x={13} y={2009} w={69} fill="#439030">2.27</Label>
      <Label x={925} y={1723} w={121} fill="#C0483F">+9.92%</Label>
      <Label x={947} y={1861} w={99} fill="#444">0.00%</Label>
      <Label x={930} y={2009} w={116} fill="#439030">−9.92%</Label>
      <Label x={12} y={2042.5} w={71} size={28} fill="#444">09:30</Label>
      <Label x={494} y={2042.5} w={72} size={28} fill="#444">11:30</Label>
      <Label x={976} y={2042.5} w={71} size={28} fill="#444">15:00</Label>
    </svg>
  );
}

const OPENING =
  '16r44r46g41r25k46r42k39g24k12k21g11r28g27g21r17r43r8k13g22r16g22r116r139k107r102r80g33k38k14r23k21g67r122r139r155r119r452r150k262k110g79k92g44r44g38g282r31k20k9k9k6k';
const AFTERNOON =
  '14k20k7k5k7k9k108k39k31k36g43k24r22g28r15g19r12k14g22r17g14k14r12k12k12g13k40r19g25g35k38k43r10k20r9k9k8g8r11k8k8g7r8g13k13k12k18k17r11g10k15g9k14r16g11k16k24g31k27r13g11k11r9k6g8k7r9g8r11k157r';

// "44r" -> height 44, red
const parse = (text, start) =>
  [...text.matchAll(/(\d+)([rgk])/g)].map(([, h, c], k) => ({ i: start + k, h: h / 3, c }));

const BARS = [
  ...parse(OPENING, 0),
  ...parse('11k22k150k20k67k11k6k15k9k7k', 89),
  ...parse('22k', 121),
  ...parse(AFTERNOON, 135),
  ...parse('9k', 240),
];
const FILLED = new Set(BARS.map((b) => b.i));
for (let i = 0; i < 239; i += 1) {
  if (!FILLED.has(i)) BARS.push({ i, h: 1.6, c: 'k' });
}
const BAR_FILL = { r: '#B9544C', g: '#5F9748', k: '#666' };

function IntradayVolume() {
  return (
    <svg width="1060" height="158" viewBox="0 2054 1060 158" className="block">
      <path d="M13 2211V2061h1034v150M271 2061v150M530 2061v150M789 2061v150" fill="none" stroke="#e8e8e8" strokeWidth="2" />
      <path d="M13 2136h1034" stroke="#ddd" strokeWidth="1.200" />
      <Label x={12} y={2091} w={114} size={28} fill="#777">量:27461</Label>
      <Label x={145} y={2091} w={133} size={28} fill="#333">额:760.7万</Label>
      <Label x={934} y={2085} w={113} size={28} fill="#444">158.67万</Label>
      {BARS.map(({ i, h, c }) => (
        <rect key={i} x={15.2 + i * 4.259} y={2211 - h} width="2.800" height={h} fill={BAR_FILL[c]} />
      ))}
    </svg>
  );
}

function DayPopup() {
  return (
    <div className="h-[695px] bg-white">
      <div className="flex h-[68px] items-center pl-[16px] text-[31px]">
        <Fit w={165} className="text-[#333]">2025-09-12</Fit>
        <Fit w={67} className="ml-[25px] text-[#D3A44D]">均价:</Fit>
        <Fit w={56} className="ml-[14px] text-[#D3A44D]">2.71</Fit>
        <Fit w={67} className="ml-[27px] text-[#BC4B42]">收盘:</Fit>
        <Fit w={254} className="ml-[13px] text-[#BC4B42]">2.77 +0.25 +9.92%</Fit>
        <svg className="ml-[305px]" width="26" height="26" viewBox="0 0 26 26">
          <path d="M1 1l24 24M25 1L1 25" stroke="#999" strokeWidth="2.500" />
        </svg>
      </div>
      <IntradayChart />
      <IntradayVolume />
      <div className="flex h-[97px] items-center pl-[187px] text-[42px] text-[#333]">
        <svg className="mt-[3px]" width="21" height="36" viewBox="0 0 21 36">
          <path d="M18 2L2 18l16 16" fill="none" stroke="#ccc" strokeWidth="3.200" />
        </svg>
        <Fit w={123} className="mt-[2px] ml-[19px]">前一天</Fit>
        <Fit w={123} className="mt-[2px] ml-[359px]">后一天</Fit>
        <svg className="mt-[3px] ml-[19px]" width="21" height="36" viewBox="0 0 21 36">
          <path d="M2 2l17 16L2 34" fill="none" stroke="#ccc" strokeWidth="3.200" />
        </svg>
      </div>
    </div>
  );
}

export default function App() {
  return (
    <div className="h-[2376px] w-[1060px] overflow-hidden bg-white font-['Roboto','Noto_Sans_CJK_SC',sans-serif]">
      <header className="bg-[#DE443F]">
        <StatusBar />
        <TitleBar />
      </header>
      <Quote />
      <IntervalBar />
      <Notice />
      <div className="h-[12px] bg-[#f4f4f4]" />
      <Tabs />
      <AverageRow />
      <KLine />
      <VolumePane />
      <CapitalPane />
      <DayPopup />
      <footer className="flex h-[67px] justify-center bg-[#252525] pt-[28px]">
        <div className="h-[12px] w-[353px] rounded-full bg-[#828282]" />
      </footer>
    </div>
  );
}
